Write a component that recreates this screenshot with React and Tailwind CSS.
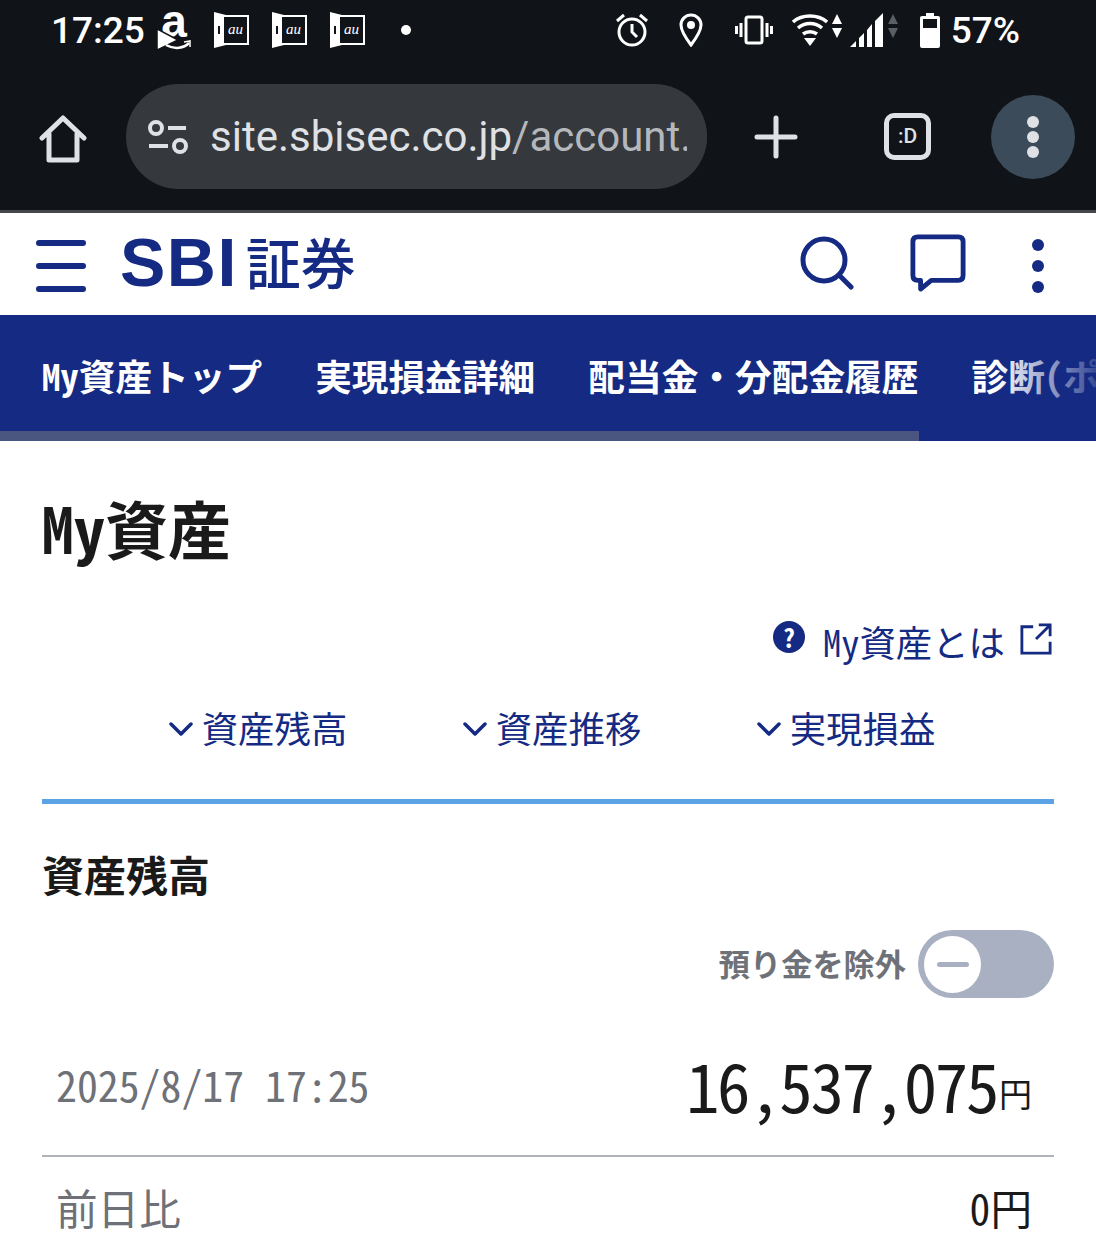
const navy = "#152a83";

function AuIcon() {
  return (
    <svg width="36" height="36" viewBox="0 0 36 36" className="block shrink-0">
      <path d="M0 0 L12 3 H35 V33 H12 L0 36 Z" fill="#fff" />
      <rect x="10" y="5" width="23" height="26" fill="#101317" />
      <rect x="4" y="14" width="2" height="8" fill="#101317" />
      <text x="21.5" y="22" textAnchor="middle" fontSize="15" fontStyle="italic" fontFamily="Liberation Serif, serif" fill="#fff">au</text>
    </svg>
  );
}

function AmazonIcon() {
  return (
    <svg width="36" height="42" viewBox="0 0 36 42" className="block shrink-0">
      <text x="17" y="28" textAnchor="middle" fontSize="46" fontWeight="700" fontFamily="Liberation Sans, sans-serif" fill="#fff">a</text>
      <path d="M0 20 L21 31 L0 41 Z" fill="#fff" stroke="#101317" strokeWidth="1.5" />
      <path d="M9 36 C18 41 27 39 32 34" fill="none" stroke="#fff" strokeWidth="2.5" />
      <path d="M27 33 L33 32 L33 38" fill="none" stroke="#fff" strokeWidth="1.5" />
    </svg>
  );
}

function StatusBar() {
  return (
    <div className="h-[60px] flex items-center pl-[51px] pr-[76px] text-white font-['Roboto',sans-serif]">
      <span className="text-[37px] font-medium leading-none w-[106px]">17:25</span>
      <AmazonIcon />
      <div className="ml-[21px] flex gap-[22px]">
        <AuIcon />
        <AuIcon />
        <AuIcon />
      </div>
      <div className="ml-[35px] w-[10px] h-[10px] rounded-full bg-white" />
      <div className="flex-1" />
      <svg width="34" height="34" viewBox="0 0 34 34" fill="none" stroke="#fff" strokeWidth="3" className="block">
        <circle cx="17" cy="19" r="13" />
        <path d="M17 11 V19 L22 24" />
        <path d="M2 8 L9 2 M32 8 L25 2" />
      </svg>
      <svg width="24" height="34" viewBox="0 0 24 34" fill="none" className="block ml-[30px]">
        <path d="M12 32 C6 24 2 18 2 12 A10 10 0 0 1 22 12 C22 18 18 24 12 32 Z" stroke="#fff" strokeWidth="3" />
        <circle cx="12" cy="12" r="4" fill="#fff" />
      </svg>
      <svg width="38" height="30" viewBox="0 0 38 30" fill="none" className="block ml-[32px]">
        <rect x="11" y="2" width="16" height="26" rx="2" stroke="#fff" strokeWidth="3" />
        <path d="M6 8 V22 M32 8 V22" stroke="#fff" strokeWidth="3" />
        <path d="M1.5 11 V19 M36.5 11 V19" stroke="#fff" strokeWidth="3" />
      </svg>
      <svg width="36" height="32" viewBox="0 0 36 32" className="block ml-[19px]" fill="none" stroke="#fff" strokeWidth="3.5">
        <path d="M1 8 C10 0 26 0 35 8" />
        <path d="M6 14 C13 8 23 8 30 14" />
        <path d="M11 20 C15 17 21 17 25 20" />
        <path d="M12 24 L18 32 L24 24 Z" fill="#fff" stroke="none" />
      </svg>
      <svg width="10" height="24" viewBox="0 0 10 24" fill="#fff" className="block ml-[4px] -mt-[8px]">
        <path d="M5 0 L10 10 H0 Z M0 14 H10 L5 24 Z" />
      </svg>
      <svg width="33" height="34" viewBox="0 0 33 34" fill="#fff" className="block ml-[8px]">
        <path d="M0 34 L6 28 V34 Z M9 25 L14 20 V34 H9 Z M17 17 L22 11 V34 H17 Z M25 8 L33 0 V34 H25 Z" />
      </svg>
      <svg width="10" height="24" viewBox="0 0 10 24" fill="#5b5e62" className="block ml-[5px] -mt-[8px]">
        <path d="M5 0 L10 10 H0 Z M0 14 H10 L5 24 Z" />
      </svg>
      <svg width="20" height="35" viewBox="0 0 20 35" className="block ml-[22px]">
        <path d="M6 0 H14 V3 H18 Q20 3 20 5 V33 Q20 35 18 35 H2 Q0 35 0 33 V5 Q0 3 2 3 H6 Z" fill="#fff" />
        <rect x="3" y="6" width="14" height="9" fill="#101317" />
      </svg>
      <span className="ml-[11px] text-[37px] font-medium leading-none">57%</span>
    </div>
  );
}

function BrowserBar() {
  return (
    <div className="h-[150px] flex items-start pt-[24px] relative">
      <div className="w-[126px] h-[105px] flex items-center justify-center">
        <svg width="48" height="48" viewBox="0 0 48 48" fill="none" stroke="#dfe1e5" strokeWidth="5" strokeLinejoin="round" strokeLinecap="round" className="block mt-[4px]">
          <path d="M3 23 L24 3 L45 23 M10 19 V45 H38 V19" />
        </svg>
      </div>
      <div className="w-[581px] h-[105px] rounded-full bg-[#35383c] flex items-center pl-[22px] relative overflow-hidden">
        <svg width="40" height="34" viewBox="0 0 40 34" fill="none" stroke="#dfe1e5" strokeWidth="4" className="block shrink-0">
          <circle cx="8" cy="8" r="6" />
          <path d="M20 8 H38 M1 26 H20" />
          <circle cx="32" cy="26" r="6" />
        </svg>
        <span className="ml-[22px] text-[42px] leading-none text-[#dfe1e5] font-['Roboto',sans-serif] whitespace-nowrap">
          site.sbisec.co.jp<span className="text-[#b4b7bb]">/account.</span>
        </span>
        <div className="absolute right-0 top-0 w-[20px] h-full bg-[#35383c]" />
      </div>
      <div className="h-[105px] flex items-center ml-[47px]">
        <svg width="44" height="44" viewBox="0 0 44 44" stroke="#dfe1e5" strokeWidth="5" strokeLinecap="round" className="block">
          <path d="M22 3 V41 M3 22 H41" />
        </svg>
      </div>
      <div className="h-[105px] flex items-center ml-[86px]">
        <div className="w-[47px] h-[47px] rounded-[10px] border-[5px] border-[#dfe1e5] flex items-center justify-center text-[#dfe1e5] text-[21px] font-medium font-['Roboto',sans-serif]">:D</div>
      </div>
      <div className="w-[84px] h-[84px] rounded-full bg-[#3c4b5a] ml-[60px] mt-[11px] flex flex-col items-center justify-center gap-[3px]">
        <div className="w-[12px] h-[12px] rounded-full bg-[#dfe1e5]" />
        <div className="w-[12px] h-[12px] rounded-full bg-[#dfe1e5]" />
        <div className="w-[12px] h-[12px] rounded-full bg-[#dfe1e5]" />
      </div>
    </div>
  );
}

function SiteHeader() {
  return (
    <div className="h-[102px] bg-white flex items-center relative">
      <div className="ml-[36px] w-[50px] flex flex-col gap-[17px] mt-[3px]">
        <div className="h-[6px] rounded-full bg-[#152a83]" />
        <div className="h-[6px] rounded-full bg-[#152a83]" />
        <div className="h-[6px] rounded-full bg-[#152a83]" />
      </div>
      <div className="ml-[34px] flex items-center text-[#152a83] leading-none -mt-[4px]">
        <span className="text-[68px] font-bold tracking-[1.5px] font-['Liberation_Sans',sans-serif]">SBI</span>
        <span className="ml-[8px] text-[55px] font-medium -mt-[4px]">証券</span>
      </div>
      <div className="flex-1" />
      <svg width="54" height="54" viewBox="0 0 54 54" fill="none" stroke={navy} strokeWidth="5" strokeLinecap="round" className="block -mt-[2px]">
        <circle cx="24" cy="24" r="21" />
        <path d="M39 39 L51 51" />
      </svg>
      <svg width="56" height="58" viewBox="0 0 58 60" fill="none" stroke={navy} strokeWidth="5" strokeLinejoin="round" className="block ml-[56px] -mt-[3px]">
        <path d="M8 3 H50 Q55 3 55 8 V43 Q55 48 50 48 H22 L11 57 V48 H8 Q3 48 3 43 V8 Q3 3 8 3 Z" />
      </svg>
      <div className="ml-[66px] mr-[52px] mt-[3px] flex flex-col gap-[9px]">
        <div className="w-[12px] h-[12px] rounded-full bg-[#152a83]" />
        <div className="w-[12px] h-[12px] rounded-full bg-[#152a83]" />
        <div className="w-[12px] h-[12px] rounded-full bg-[#152a83]" />
      </div>
    </div>
  );
}

function NavBar() {
  const items = ["My資産トップ", "実現損益詳細", "配当金・分配金履歴", "診断(ポートフォリオ)"];
  return (
    <div className="h-[126px] bg-[#152a83] relative overflow-hidden">
      <div className="h-[116px] flex items-center pl-[42px] gap-[53px] pt-[6px] text-white text-[36.7px] font-bold whitespace-nowrap">
        {items.map((t) => <span key={t}>{t}</span>)}
      </div>
      <div className="h-[10px] w-[919px] bg-[#4b5680]" />
      <div className="absolute right-0 top-0 w-[100px] h-[116px] bg-gradient-to-r from-transparent to-[#152a83]/85" />
    </div>
  );
}

function Chevron() {
  return (
    <svg width="24" height="16" viewBox="0 0 24 16" fill="none" stroke={navy} strokeWidth="3.5" strokeLinecap="round" strokeLinejoin="round" className="block mt-[4px]">
      <path d="M2 3 L12 13 L22 3" />
    </svg>
  );
}

function Content() {
  return (
    <div className="bg-white px-[42px]">
      <h1 className="pt-[44px] h-[180px] text-[63px] font-bold leading-[84px] text-[#1a1a1a]">My資産</h1>
      <div className="flex justify-end items-center text-[#152a83] text-[36.4px] leading-[44px] -mt-[2px]">
        <div className="w-[32px] h-[32px] rounded-full bg-[#152a83] text-white text-[25px] font-bold flex items-center justify-center -mt-[8px]">?</div>
        <span className="ml-[18px]">My資産とは</span>
        <svg width="32" height="32" viewBox="0 0 34 34" fill="none" stroke={navy} strokeWidth="3" className="block ml-[15px] mr-[2px] -mt-[4px]">
          <path d="M14 4 H2 V32 H32 V20 M20 2 H32 V14 M32 2 L17 17" />
        </svg>
      </div>
      <div className="flex justify-center pl-[8px] pt-[42px] text-[#152a83] text-[36.4px] leading-[44px]">
        {["資産残高", "資産推移", "実現損益"].map((t) => (
          <div key={t} className="w-[294px] flex items-center justify-center gap-[9px]">
            <Chevron />
            <span>{t}</span>
          </div>
        ))}
      </div>
      <div className="h-[5px] bg-[#5ba3e4] mt-[50px]" />
      <h2 className="mt-[42px] text-[42px] font-bold leading-[56px] text-[#1a1a1a]">資産残高</h2>
      <div className="flex justify-end items-center mt-[28px]">
        <span className="text-[31.2px] font-bold text-[#6e7178] mr-[12px] -mt-[2px]">預り金を除外</span>
        <div className="w-[136px] h-[68px] rounded-full bg-[#a8b0c2] flex items-center pl-[6px]">
          <div className="w-[57px] h-[57px] rounded-full bg-white flex items-center justify-center">
            <div className="w-[32px] h-[5px] rounded-full bg-[#a8b0c2]" />
          </div>
        </div>
      </div>
      <div className="flex justify-between items-end pl-[14px] pr-[22px] mt-[48px] h-[111px] border-b-[2px] border-[#b0b3b8] pb-[35px]">
        <span className="text-[41.8px] leading-[56px] mb-[8px] text-[#6e7178]">2025/8/17 17:25</span>
        <div className="flex items-end leading-none text-[#1a1a1a]">
          <span className="text-[67px] tracking-[-2.4px] leading-[72px]">16,537,075</span>
          <span className="text-[33px] ml-[2px] mb-[10px]">円</span>
        </div>
      </div>
      <div className="flex justify-between items-center pl-[14px] pr-[22px] pt-[22px] text-[41.6px] leading-[56px]">
        <span className="text-[#6e7178]">前日比</span>
        <span className="text-[#1a1a1a]">0円</span>
      </div>
    </div>
  );
}

export default function App() {
  return (
    <div className="w-[1096px] h-[1238px] overflow-hidden bg-white font-['Noto_Sans_CJK_JP',sans-serif] [font-feature-settings:'hwid']">
      <div className="bg-[#101317] h-[210px] [font-feature-settings:normal]">
        <StatusBar />
        <BrowserBar />
      </div>
      <div className="h-[3px] bg-[#45474a]" />
      <SiteHeader />
      <NavBar />
      <Content />
    </div>
  );
}
